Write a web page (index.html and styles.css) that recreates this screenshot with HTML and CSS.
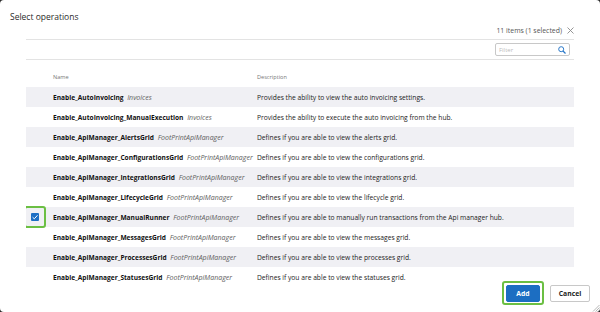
FILE: index.html
```html
<!DOCTYPE html>
<html>
<head>
    <meta charset="utf-8">
    <title>Select operations</title>
    <link rel="stylesheet" href="styles.css">
</head>
<body>
    <div class="dialog">
        <div class="dialog-header">
            <h1>Select operations</h1>
        </div>

        <div class="list-toolbar">
            <span class="count">11 items (1 selected)</span>
            <button class="close" title="Clear selection">
                <svg width="7" height="7" viewBox="0 0 7 7"><path d="M0.5 0.5 L6.5 6.5 M6.5 0.5 L0.5 6.5" stroke="#8a8a8a" stroke-width="0.9" fill="none"/></svg>
            </button>
        </div>

        <div class="grid">
            <div class="filter-bar">
                <div class="filter">
                    <input type="text" placeholder="Filter">
                    <svg width="8" height="8" viewBox="0 0 8 8"><circle cx="3.2" cy="3.2" r="2.5" stroke="#2b79c9" stroke-width="1" fill="none"/><path d="M5 5 L7.5 7.5" stroke="#2b79c9" stroke-width="1.2"/></svg>
                </div>
            </div>

            <div class="grid-head">
                <div></div>
                <div>Name</div>
                <div>Description</div>
            </div>

            <div class="grid-body">
                <div class="row">
                    <div class="check"></div>
                    <div class="name"><b>Enable_AutoInvoicing</b> <i>Invoices</i></div>
                    <div class="desc">Provides the ability to view the auto invoicing settings.</div>
                </div>
                <div class="row">
                    <div class="check"></div>
                    <div class="name"><b>Enable_AutoInvoicing_ManualExecution</b> <i>Invoices</i></div>
                    <div class="desc">Provides the ability to execute the auto invoicing from the hub.</div>
                </div>
                <div class="row">
                    <div class="check"></div>
                    <div class="name"><b>Enable_ApiManager_AlertsGrid</b> <i>FootPrintApiManager</i></div>
                    <div class="desc">Defines if you are able to view the alerts grid.</div>
                </div>
                <div class="row">
                    <div class="check"></div>
                    <div class="name"><b>Enable_ApiManager_ConfigurationsGrid</b> <i>FootPrintApiManager</i></div>
                    <div class="desc">Defines if you are able to view the configurations grid.</div>
                </div>
                <div class="row">
                    <div class="check"></div>
                    <div class="name"><b>Enable_ApiManager_IntegrationsGrid</b> <i>FootPrintApiManager</i></div>
                    <div class="desc">Defines if you are able to view the integrations grid.</div>
                </div>
                <div class="row">
                    <div class="check"></div>
                    <div class="name"><b>Enable_ApiManager_LifecycleGrid</b> <i>FootPrintApiManager</i></div>
                    <div class="desc">Defines if you are able to view the lifecycle grid.</div>
                </div>
                <div class="row selected">
                    <div class="check">
                        <span class="highlight">
                            <span class="box">
                                <svg width="8" height="8" viewBox="0 0 8 8"><path d="M1.6 4.2 L3.3 5.8 L6.5 2.3" stroke="#fff" stroke-width="1" fill="none"/></svg>
                            </span>
                        </span>
                    </div>
                    <div class="name"><b>Enable_ApiManager_ManualRunner</b> <i>FootPrintApiManager</i></div>
                    <div class="desc">Defines if you are able to manually run transactions from the Api manager hub.</div>
                </div>
                <div class="row">
                    <div class="check"></div>
                    <div class="name"><b>Enable_ApiManager_MessagesGrid</b> <i>FootPrintApiManager</i></div>
                    <div class="desc">Defines if you are able to view the messages grid.</div>
                </div>
                <div class="row">
                    <div class="check"></div>
                    <div class="name"><b>Enable_ApiManager_ProcessesGrid</b> <i>FootPrintApiManager</i></div>
                    <div class="desc">Defines if you are able to view the processes grid.</div>
                </div>
                <div class="row">
                    <div class="check"></div>
                    <div class="name"><b>Enable_ApiManager_StatusesGrid</b> <i>FootPrintApiManager</i></div>
                    <div class="desc">Defines if you are able to view the statuses grid.</div>
                </div>
            </div>
        </div>

        <div class="dialog-footer">
            <span class="highlight">
                <button class="button primary">Add</button>
            </span>
            <button class="button">Cancel</button>
        </div>

        <svg class="grip" width="8" height="8" viewBox="0 0 8 8"><path d="M7.5 1 L1 7.5 M7.5 3.5 L3.5 7.5 M7.5 6 L6 7.5" stroke="#999" stroke-width="0.7"/></svg>
    </div>
</body>
</html>
```

FILE: styles.css
```css
* {
    box-sizing: border-box;
}

html, body {
    margin: 0;
    height: 100%;
}

body {
    background: #2a2a2a;
    font-family: 'Open Sans', 'Noto Sans', sans-serif;
    color: #333;
}

.dialog {
    position: relative;
    height: 312px;
    background: white;
    border-radius: 4px;
    overflow: hidden;
    display: flex;
    flex-direction: column;
}

.dialog-header {
    height: 22px;
    padding: 11px 0 0 10px;
}

.dialog-header h1 {
    margin: 0;
    font-size: 8.5px;
    font-weight: normal;
    line-height: 12px;
    color: #2b2b2b;
}

.list-toolbar {
    height: 17px;
    display: flex;
    justify-content: flex-end;
    align-items: center;
    gap: 4px;
    padding-right: 26px;
}

.count {
    font-size: 6.9px;
    color: #555;
}

.close {
    border: none;
    background: none;
    padding: 0;
    width: 8px;
    height: 8px;
    display: flex;
    align-items: center;
    justify-content: center;
    cursor: pointer;
}

.grid {
    margin: 0 26px;
    font-size: 6.7px;
}

.filter-bar {
    height: 21px;
    border-top: 1px solid #e3e3e3;
    border-bottom: 1px solid #e3e3e3;
    display: flex;
    justify-content: flex-end;
    align-items: center;
    padding-right: 4px;
}

.filter {
    width: 75px;
    height: 13px;
    border: 1px solid #c8c8c8;
    border-radius: 2px;
    display: flex;
    align-items: center;
    padding: 0 3px;
}

.filter input {
    flex: 1;
    min-width: 0;
    border: none;
    outline: none;
    padding: 0;
    font-family: inherit;
    font-size: 6px;
    color: #333;
    background: transparent;
}

.filter input::placeholder {
    color: #bbb;
}

.grid-head,
.row {
    display: grid;
    grid-template-columns: 27px 204px 1fr;
    align-items: center;
}

.grid-head {
    height: 20px;
    margin-top: 7px;
    font-size: 5.6px;
    color: #777;
}

.grid-body {
    height: 199px;
    overflow: hidden;
}

.row {
    height: 20px;
    color: #222;
}

.row:nth-child(odd) {
    background: #f0f0f4;
}

.name {
    white-space: nowrap;
    overflow: hidden;
    padding-right: 6px;
}

.name b {
    font-size: 6.6px;
    font-weight: bold;
    color: #111;
}

.name i {
    font-size: 7px;
    color: #5e5e5e;
    margin-left: 2px;
}

.check {
    position: relative;
    height: 100%;
}

.check .highlight {
    position: absolute;
    left: -2px;
    top: -1px;
    width: 22px;
    height: 22px;
}

.highlight {
    display: flex;
    align-items: center;
    justify-content: center;
    border: 2px solid #6bbf43;
    border-radius: 3px;
}

.box {
    width: 8px;
    height: 8px;
    background: #1d6fc4;
    border-radius: 1px;
    display: flex;
}

.dialog-footer {
    display: flex;
    justify-content: flex-end;
    align-items: center;
    gap: 6px;
    padding: 0 10px 0 0;
    margin-top: -5px;
}

.dialog-footer .highlight {
    width: 42px;
    height: 24px;
}

.button {
    height: 17px;
    padding: 0;
    border: 1px solid #c8c8c8;
    border-radius: 2px;
    background: white;
    color: #222;
    font-family: inherit;
    font-size: 6.8px;
    font-weight: bold;
    width: 40px;
    cursor: pointer;
}

.button.primary {
    width: 34px;
    background: #1c6ec2;
    border-color: #1c6ec2;
    color: white;
}

.grip {
    position: absolute;
    right: 0;
    bottom: 0;
}
```
